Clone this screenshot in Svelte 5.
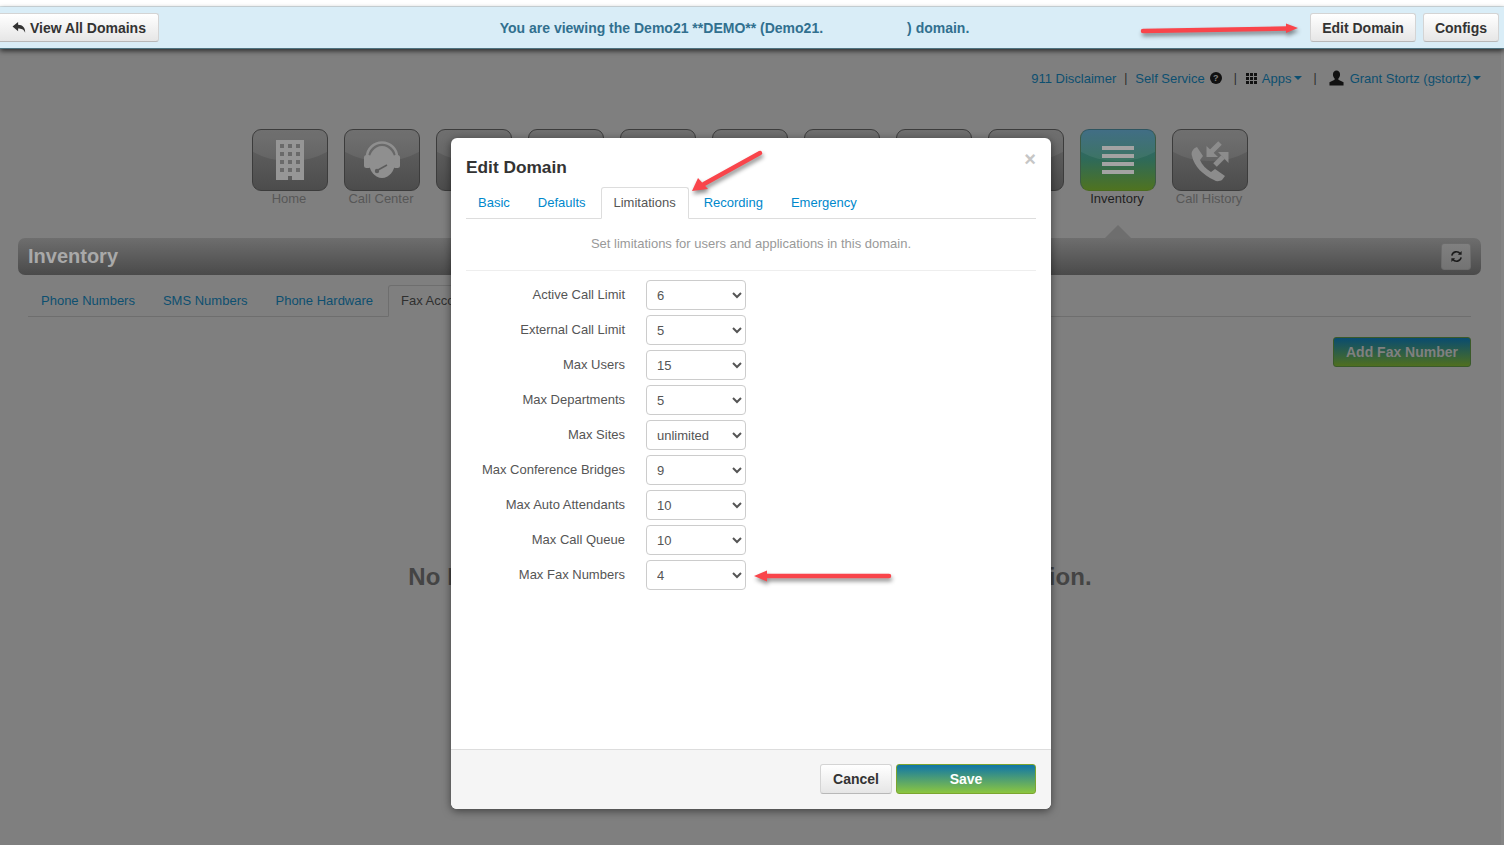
<script>
  const navItems = [
    { label: 'Home', icon: 'home' },
    { label: 'Call Center', icon: 'headset' },
    { label: '' }, { label: '' }, { label: '' }, { label: '' }, { label: '' }, { label: '' }, { label: '' },
    { label: 'Inventory', icon: 'list', active: true },
    { label: 'Call History', icon: 'history' }
  ];

  const limits = [
    { label: 'Active Call Limit', value: '6' },
    { label: 'External Call Limit', value: '5' },
    { label: 'Max Users', value: '15' },
    { label: 'Max Departments', value: '5' },
    { label: 'Max Sites', value: 'unlimited' },
    { label: 'Max Conference Bridges', value: '9' },
    { label: 'Max Auto Attendants', value: '10' },
    { label: 'Max Call Queue', value: '10' },
    { label: 'Max Fax Numbers', value: '4' }
  ];

  const pageTabs = ['Phone Numbers', 'SMS Numbers', 'Phone Hardware', 'Fax Accounts'];
  const modalTabs = ['Basic', 'Defaults', 'Limitations', 'Recording', 'Emergency'];
  const windowRows = [0, 1, 2, 3];
  const windowCols = [0, 1, 2];
</script>

<div class="strip"></div>

<header class="banner">
  <button class="btn first" type="button">
    <svg class="reply" viewBox="0 0 16 14"><path d="M6.500 1 .5 6l6 5V8c3.600 0 6 .8 7.600 4.600C14.300 7.400 11.500 4 6.500 4z" /></svg>
    View All Domains
  </button>
  <p class="viewing">You are viewing the Demo21 **DEMO** (Demo21.<span class="blank"></span>) domain.</p>
  <div class="banner-actions">
    <button class="btn edit" type="button">Edit Domain</button>
    <button class="btn configs" type="button">Configs</button>
  </div>
</header>

<main class="page">
  <nav class="user-links">
    <span class="link">911 Disclaimer</span>
    <span class="sep">|</span>
    <span class="link">Self Service</span>
    <span class="help">?</span>
    <span class="sep sep-apps">|</span>
    <svg class="grid-icon" viewBox="0 0 11 11">
      {#each [0, 4, 8] as y}
        {#each [0, 4, 8] as x}
          <rect {x} {y} width="3" height="3" />
        {/each}
      {/each}
    </svg>
    <span class="link">Apps</span><span class="caret"></span>
    <span class="sep sep-user">|</span>
    <svg class="user-icon" viewBox="0 0 16 16"><path d="M8 0c2.300 0 3.800 1.800 3.800 4.200 0 1.800-.8 3.400-1.800 4.300v1.300L15.500 12.500V16H.5v-3.500L6 9.800V8.500C5 7.600 4.200 6 4.200 4.200 4.200 1.800 5.700 0 8 0z" /></svg>
    <span class="link">Grant Stortz (gstortz)</span><span class="caret"></span>
  </nav>

  <div class="tiles">
    {#each navItems as item}
      <div class="tile-item">
        <div class="tile" class:active={item.active}>
          {#if item.icon}
            <svg viewBox="0 0 76 62">
              {#if item.icon === 'home'}
                <rect x="24" y="11" width="28" height="40" fill="#969696" />
                {#each windowRows as r}
                  {#each windowCols as c}
                    <rect x={28 + c * 8} y={15 + r * 8} width="4" height="4" fill="#6a6a6a" />
                  {/each}
                {/each}
                <rect x="36" y="47" width="4" height="4" fill="#5c5c5c" />
              {:else if item.icon === 'headset'}
                <path d="M23 28a15 14.500 0 0 1 30 0" fill="none" stroke="#8f8f8f" stroke-width="2.500" />
                <rect x="20" y="26" width="7" height="13" rx="2.500" fill="#8f8f8f" />
                <rect x="49" y="26" width="7" height="13" rx="2.500" fill="#8f8f8f" />
                <ellipse cx="38" cy="33" rx="13" ry="16" fill="#8f8f8f" />
                <path d="M34 41l9-5" stroke="#5c5c5c" stroke-width="1.500" />
                <circle cx="33" cy="42" r="2.200" fill="#5c5c5c" />
              {:else if item.icon === 'list'}
                <rect x="22" y="17" width="32" height="4" fill="#a3a3a3" />
                <rect x="22" y="25" width="32" height="4" fill="#a3a3a3" />
                <rect x="22" y="33" width="32" height="4" fill="#a3a3a3" />
                <rect x="22" y="41" width="32" height="4" fill="#a3a3a3" />
              {:else}
                <path d="M25 18l6 9-3 4c2 5 6 9 11 12l4-3 10 7-3 4c-2 1-5 2-8 0C31 46 22 37 20 27c-1-3 0-7 5-9z" fill="#8c8c8c" />
                <path d="M48 14l-9 9" stroke="#8c8c8c" stroke-width="5" />
                <path d="M34.500 17V28H46z" fill="#8c8c8c" />
                <path d="M43 36l8-8" stroke="#8c8c8c" stroke-width="5" />
                <path d="M46 23H56.500V34z" fill="#8c8c8c" />
              {/if}
            </svg>
          {/if}
        </div>
        <span class="tile-label" class:on={item.active}>{item.label}</span>
      </div>
    {/each}
  </div>

  <section class="title-bar">
    <h1>Inventory</h1>
    <button class="refresh" type="button" aria-label="Refresh">
      <svg viewBox="0 0 14 14" fill="none" stroke="#1c1c1c" stroke-width="1.700">
        <path d="M2 6a5 5 0 0 1 9-2" />
        <path d="M12 8a5 5 0 0 1-9 2" />
        <path d="M12.500 1v4h-4z" fill="#1c1c1c" stroke="none" />
        <path d="M1.500 13V9h4z" fill="#1c1c1c" stroke="none" />
      </svg>
    </button>
  </section>

  <ul class="page-tabs">
    {#each pageTabs as tab, i}
      <li class:current={i === 3}>{tab}</li>
    {/each}
  </ul>

  <div class="content-actions">
    <button class="add" type="button">Add Fax Number</button>
  </div>

  <p class="empty">No Fax Accounts Available for the current search selection.</p>
</main>

<div class="modal">
  <div class="modal-head">
    <h2>Edit Domain</h2>
    <span class="close">×</span>
  </div>

  <div class="modal-body">
    <ul class="modal-tabs">
      {#each modalTabs as tab, i}
        <li class:current={i === 2}>{tab}</li>
      {/each}
    </ul>

    <p class="intro">Set limitations for users and applications in this domain.</p>

    <form class="limits">
      {#each limits as row}
        <label class="limit-row">
          <span>{row.label}</span>
          <select value={row.value}>
            <option value={row.value}>{row.value}</option>
          </select>
        </label>
      {/each}
    </form>
  </div>

  <div class="modal-foot">
    <button class="btn cancel" type="button">Cancel</button>
    <button class="save" type="button">Save</button>
  </div>
</div>

<!-- hand-drawn red annotations on top of the screenshot -->
<svg class="marks" viewBox="0 0 1504 845">
  <g fill="#f9454b" stroke="#f9454b" stroke-linecap="round">
    <path d="M1143 31 1288 28.500" stroke-width="4.500" />
    <path d="M1286 23.500 1298 28 1286 33z" stroke="none" />
    <path d="M760 153 704 184" stroke-width="4.500" />
    <path d="M698 178 692 191 708 189z" stroke="none" />
    <path d="M889 576 766 576" stroke-width="4.500" />
    <path d="M767 570.500 754 576 767 581.500z" stroke="none" />
  </g>
</svg>

<style>
  :global(body) {
    margin: 0;
    background: #858585;
    overflow: hidden;
    font-family: "Liberation Sans", Arial, sans-serif;
  }

  .strip {
    height: 6px;
    background: #fff;
    border-bottom: 1px solid #dbe6ea;
  }

  .banner {
    position: relative;
    z-index: 1;
    display: flex;
    align-items: center;
    height: 42px;
    box-sizing: border-box;
    padding: 0 5px 0 0;
    background: #d9edf7;
    border-bottom: 1px solid #4f7380;
    box-shadow: 0 2px 5px rgba(0, 0, 0, 0.65);
  }

  .btn {
    height: 29px;
    padding: 0 12px;
    border: 1px solid #d4d4d4;
    border-bottom-color: #b8b8b8;
    border-radius: 3px;
    background: linear-gradient(#fff, #e6e6e6);
    color: #333;
    font: 700 14px "Liberation Sans", Arial, sans-serif;
    white-space: nowrap;
  }

  .first {
    display: flex;
    align-items: center;
    gap: 3px;
    width: 159px;
    border-left: 0;
    border-radius: 0 3px 3px 0;
  }

  .reply {
    flex: none;
    width: 15px;
    height: 13px;
    fill: #333;
  }

  .viewing {
    flex: 1;
    margin: 0;
    text-align: center;
    color: #31708f;
    font-size: 14px;
    font-weight: 700;
  }

  .blank {
    display: inline-block;
    width: 84px;
  }

  .banner-actions {
    display: flex;
    gap: 7px;
  }

  .edit {
    width: 106px;
    padding: 0;
  }

  .configs {
    width: 76px;
    padding: 0;
  }

  .page {
    height: 796px;
    margin-right: 3px;
    background: #7f7f7f;
  }

  .user-links {
    display: flex;
    align-items: center;
    justify-content: flex-end;
    height: 20px;
    padding: 19px 20px 0 0;
    font-size: 13px;
    color: #333;
  }

  .link {
    color: #0d4f70;
    white-space: nowrap;
  }

  .sep {
    margin: 0 8px;
    color: #2a2a2a;
    font-size: 12px;
  }

  .sep-apps {
    margin: 0 9px 0 12px;
  }

  .sep-user {
    margin: 0 12px;
  }

  .help {
    width: 12px;
    height: 12px;
    margin-left: 5px;
    border-radius: 50%;
    background: #111;
    color: #808080;
    font-size: 9px;
    font-weight: 700;
    line-height: 12px;
    text-align: center;
  }

  .grid-icon {
    width: 11px;
    height: 11px;
    margin-right: 5px;
    fill: #111;
  }

  .user-icon {
    width: 15px;
    height: 16px;
    margin-right: 6px;
    fill: #111;
  }

  .caret {
    margin-left: 2px;
    border-top: 4px solid #0d4f70;
    border-left: 4px solid transparent;
    border-right: 4px solid transparent;
  }

  .tiles {
    display: flex;
    gap: 16px;
    padding: 41px 0 0 252px;
  }

  .tile-item {
    position: relative;
    width: 76px;
    text-align: center;
  }

  .tile {
    position: relative;
    overflow: hidden;
    box-sizing: border-box;
    height: 62px;
    border: 1px solid #3c3c3c;
    border-radius: 9px;
    background: linear-gradient(#666, #4c4c4c);
  }

  .tile::before {
    content: "";
    position: absolute;
    left: -20%;
    right: -20%;
    top: -30px;
    height: 61px;
    border-radius: 50%;
    background: rgba(255, 255, 255, 0.07);
  }

  .tile svg {
    position: absolute;
    left: -1px;
    top: -1px;
    width: 76px;
    height: 62px;
  }

  .tile.active {
    border-color: #2f5560 #3c5a45 #4a6a20;
    background: linear-gradient(#33647c, #2f6a58 50%, #4f7320);
  }

  .tile-label {
    display: block;
    height: 16px;
    padding-right: 2px;
    color: #575757;
    font-size: 13px;
    line-height: 16px;
    white-space: nowrap;
  }

  .tile-label.on {
    color: #1f1f1f;
  }

  .tile-item:has(.active)::after {
    content: "";
    position: absolute;
    left: 25px;
    top: 96px;
    border-bottom: 13px solid #6e6e6e;
    border-left: 13px solid transparent;
    border-right: 13px solid transparent;
  }

  .title-bar {
    display: flex;
    align-items: center;
    justify-content: space-between;
    box-sizing: border-box;
    height: 37px;
    margin: 31px 20px 0 18px;
    padding: 0 10px;
    border-radius: 7px;
    background: linear-gradient(#6e6e6e, #4a4a4a);
  }

  .title-bar h1 {
    margin: 0;
    color: #a9a9a9;
    font-size: 20px;
    font-weight: 700;
  }

  .refresh {
    display: flex;
    align-items: center;
    justify-content: center;
    width: 30px;
    height: 27px;
    padding: 0;
    border: 1px solid #6c6c6c;
    border-radius: 3px;
    background: linear-gradient(#808080, #737373);
  }

  .refresh svg {
    width: 13px;
    height: 13px;
  }

  .page-tabs,
  .modal-tabs {
    display: flex;
    box-sizing: border-box;
    height: 32px;
    margin: 0;
    padding: 0;
    list-style: none;
    font-size: 13px;
  }

  .page-tabs {
    margin: 10px 30px 0 28px;
    border-bottom: 1px solid #6e6e6e;
  }

  .page-tabs li {
    margin-right: 2px;
    padding: 8px 13px;
    color: #0d4f70;
  }

  .page-tabs li.current {
    height: 32px;
    box-sizing: border-box;
    padding: 7px 12px;
    border: 1px solid #6e6e6e;
    border-bottom-color: #7f7f7f;
    border-radius: 3px 3px 0 0;
    color: #2f2f2f;
  }

  .content-actions {
    display: flex;
    justify-content: flex-end;
    margin: 20px 30px 0 0;
  }

  .add {
    width: 138px;
    height: 30px;
    padding: 0;
    border: 1px solid #3a5a2a;
    border-radius: 3px;
    background: linear-gradient(#094c70, #4f6f1f);
    color: #808080;
    font: 700 14px "Liberation Sans", Arial, sans-serif;
  }

  .empty {
    margin: 195px 0 0;
    padding-right: 1px;
    color: #444;
    font-size: 24px;
    font-weight: 700;
    line-height: 30px;
    letter-spacing: 0.1px;
    text-align: center;
  }

  .modal {
    position: absolute;
    left: 451px;
    top: 138px;
    z-index: 2;
    display: flex;
    flex-direction: column;
    width: 600px;
    height: 671px;
    overflow: hidden;
    border-radius: 6px;
    background: #fff;
    box-shadow: 0 2px 8px rgba(0, 0, 0, 0.5);
  }

  .modal-head {
    position: relative;
    height: 49px;
    padding: 0 15px;
  }

  .modal-head h2 {
    margin: 0;
    padding-top: 19px;
    color: #333;
    font-size: 17.300px;
    font-weight: 700;
    line-height: 20px;
  }

  .close {
    position: absolute;
    right: 15px;
    top: 11px;
    color: #c6c6c6;
    font-size: 20px;
    font-weight: 700;
    line-height: 20px;
  }

  .modal-body {
    flex: 1;
    padding: 0 15px;
  }

  .modal-tabs {
    border-bottom: 1px solid #ddd;
  }

  .modal-tabs li {
    margin-right: 2px;
    padding: 8px 13px;
    color: #0088cc;
  }

  .modal-tabs li:first-child {
    margin-left: -1px;
  }

  .modal-tabs li.current {
    height: 32px;
    box-sizing: border-box;
    padding: 7px 12px;
    border: 1px solid #ddd;
    border-bottom-color: #fff;
    border-radius: 3px 3px 0 0;
    background: #fff;
    color: #555;
  }

  .intro {
    height: 52px;
    margin: 0 0 9px;
    box-sizing: border-box;
    padding-top: 17px;
    border-bottom: 1px solid #eee;
    color: #999;
    font-size: 13px;
    text-align: center;
  }

  .limits {
    display: grid;
    gap: 5px;
  }

  .limit-row {
    display: flex;
    align-items: center;
    gap: 21px;
    color: #555;
    font-size: 13px;
  }

  .limit-row span {
    width: 159px;
    margin-top: -2px;
    text-align: right;
    white-space: nowrap;
  }

  .limit-row select {
    width: 100px;
    height: 30px;
    padding: 0 6px;
    border: 1px solid #ccc;
    border-radius: 4px;
    background: #fff;
    color: #555;
    font: 13px "Liberation Sans", Arial, sans-serif;
  }

  .modal-foot {
    display: flex;
    justify-content: flex-end;
    gap: 4px;
    box-sizing: border-box;
    height: 60px;
    padding: 14px 15px 0;
    border-top: 1px solid #ddd;
    background: #f5f5f5;
  }

  .cancel {
    width: 72px;
    height: 30px;
    padding: 0;
  }

  .save {
    width: 140px;
    height: 30px;
    padding: 0;
    border: 1px solid #7ca52f;
    border-radius: 3px;
    background: linear-gradient(#0f76a8, #8cc63f);
    color: #fff;
    font: 700 14px "Liberation Sans", Arial, sans-serif;
  }

  .marks {
    position: absolute;
    left: 0;
    top: 0;
    z-index: 3;
    width: 1504px;
    height: 845px;
    pointer-events: none;
    filter: drop-shadow(1px 3px 2px rgba(0, 0, 0, 0.45));
  }
</style>
